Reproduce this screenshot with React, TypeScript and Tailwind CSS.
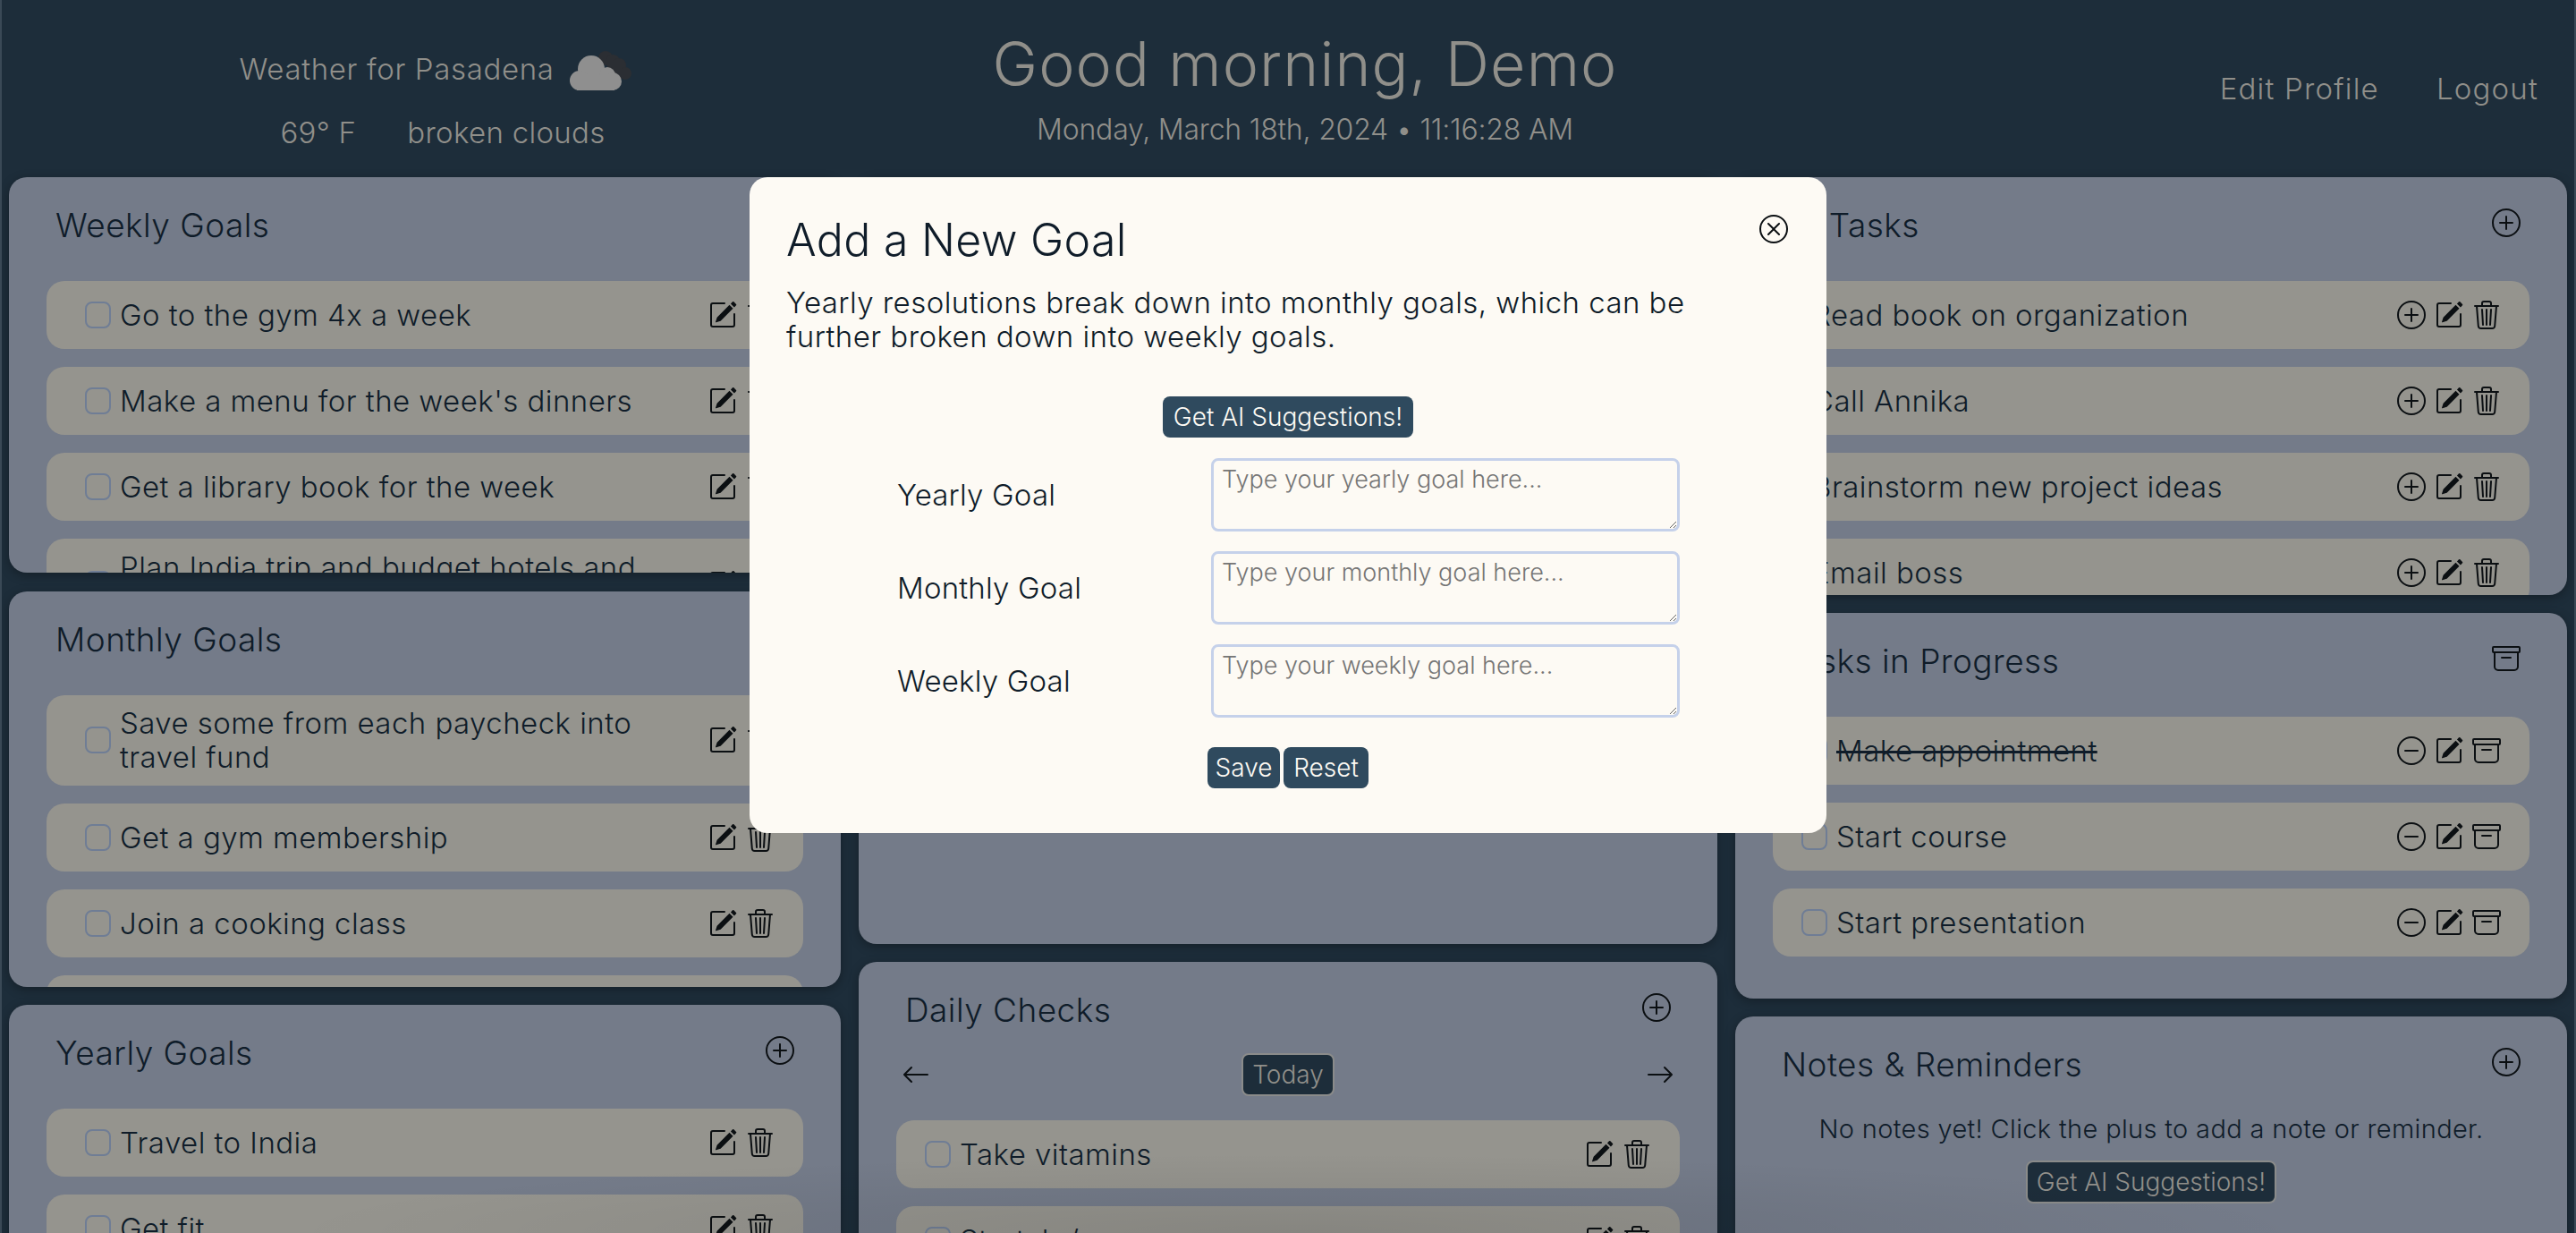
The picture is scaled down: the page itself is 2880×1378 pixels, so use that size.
import React from "react";
import {
  BsPlusCircle,
  BsPencilSquare,
  BsTrash3,
  BsArchive,
  BsDashCircle,
  BsXCircle,
  BsArrowLeft,
  BsArrowRight,
} from "react-icons/bs";

const font = "font-['Inter','Liberation_Sans',sans-serif]";

function Cloud() {
  return (
    <svg width="72" height="48" viewBox="0 0 72 48" className="ml-[15px] blur-[0.6px]">
      <g fill="#2b2e33">
        <circle cx="42" cy="11" r="8" />
        <circle cx="50" cy="15" r="8" />
        <circle cx="57" cy="19" r="8" />
        <circle cx="64" cy="28" r="7" />
        <rect x="44" y="14" width="16" height="20" />
      </g>
      <g fill="#8f8f8f">
        <circle cx="26" cy="23" r="15" />
        <circle cx="44" cy="30" r="9" />
        <circle cx="13" cy="36" r="11" />
        <circle cx="50" cy="37" r="10" />
        <rect x="10" y="30" width="42" height="17" />
      </g>
    </svg>
  );
}

function Check() {
  return <span className="block w-[29px] h-[30px] shrink-0 rounded-[8px] border-2 border-[#6f7d95]" />;
}

function Row({
  text,
  add,
  minus,
  archive,
  strike,
  narrow,
  wide,
  noCheck,
}: {
  text: string;
  add?: boolean;
  minus?: boolean;
  archive?: boolean;
  strike?: boolean;
  narrow?: boolean;
  wide?: boolean;
  noCheck?: boolean;
}) {
  return (
    <div
      className={`flex items-center shrink-0 min-h-[76px] rounded-[20px] bg-[#95948e] pr-[32px] py-[12.5px] ${wide ? "pl-[43px]" : noCheck ? "pl-[44px]" : "pl-[32px]"}`}
    >
      {!noCheck && <Check />}
      <span
        className={`text-[33px] leading-[38.4px] font-[350] tracking-[0.45px] text-[#0f1c29] ${noCheck ? "" : "ml-[10px]"} ${strike ? "line-through" : ""} ${narrow ? "max-w-[640px]" : ""}`}
      >
        {text}
      </span>
      <span className="ml-auto flex items-center gap-[10px] text-[#0b0f12]">
        {add && <BsPlusCircle size={32} />}
        {minus && <BsDashCircle size={32} />}
        <BsPencilSquare size={32} />
        {archive ? <BsArchive size={32} /> : <BsTrash3 size={32} />}
      </span>
    </div>
  );
}

function Panel({
  title,
  h,
  icon,
  children,
  shift,
}: {
  title?: string;
  h: string;
  icon?: React.ReactNode;
  children?: React.ReactNode;
  shift?: boolean;
}) {
  return (
    <section className={`${h} shrink-0 overflow-hidden rounded-[20px] bg-[#747b89] shadow-[0_3px_12px_rgba(0,0,0,0.3)] px-[42px] pt-[34px]`}>
      {title && (
        <div className="flex items-start justify-between pl-[10px] pr-[10px] h-[82px]">
          <h2 className={`text-[37px] leading-[40px] font-[350] tracking-[0.45px] text-[#0f1c29] ${shift ? "-ml-[13px]" : ""}`}>{title}</h2>
          {icon && <span className="block text-[#0b0f12] mt-[1px]">{icon}</span>}
        </div>
      )}
      {children}
    </section>
  );
}

function Rows({ children }: { children: React.ReactNode }) {
  return <div className="flex flex-col gap-[20px]">{children}</div>;
}

function Area({ label, placeholder }: { label: string; placeholder: string }) {
  return (
    <div className="flex items-center">
      <label className="w-[351px] pt-[1px] text-[33px] font-[350] tracking-[0.2px] text-[#0f1c29]">{label}</label>
      <textarea
        placeholder={placeholder}
        className="block w-[524px] h-[82px] rounded-[8px] border-[3px] border-[#c5d1ea] bg-[#fdfaf4] px-[9px] py-[5px] text-[27px] leading-[32px] font-light placeholder:text-[#757575]"
      />
    </div>
  );
}

function DarkBtn({ children, className = "" }: { children: React.ReactNode; className?: string }) {
  return (
    <button className={`h-[46px] rounded-[8px] bg-[#2f4a5e] text-[#fdfaf4] text-[28px] leading-[46px] font-light ${className}`}>
      {children}
    </button>
  );
}

export default function App() {
  return (
    <div className={`relative h-[1378px] overflow-hidden border-x-2 border-[#3a4956] bg-[#1d2d3a] ${font}`}>
      <header className="flex h-[198px] text-[#908f8a] font-[350]">
        <div className="w-[958px] flex flex-col items-center pl-[12px] pt-[54px]">
          <div className="flex items-center h-[48px] text-[33px] tracking-[0.65px]">
            Weather for Pasadena
            <Cloud />
          </div>
          <div className="flex gap-[57px] ml-[16px] mt-[26px] text-[33px] leading-[40px] tracking-[0.3px]">
            <span>69° F</span>
            <span>broken clouds</span>
          </div>
        </div>
        <div className="w-[998px] flex flex-col items-center pt-[33px]">
          <h1 className="text-[68px] leading-[76px] font-[350] tracking-[1.1px]">Good morning, Demo</h1>
          <p className="mt-[16px] text-[32px] leading-[40px] tracking-[-0.2px]">Monday, March 18th, 2024 • 11:16:28 AM</p>
        </div>
        <nav className="flex-1 flex justify-end gap-[64px] pr-[40px] pt-[78px] text-[33px] leading-[42px] tracking-[1.2px]">
          <span>Edit Profile</span>
          <span>Logout</span>
        </nav>
      </header>

      <main className="flex gap-[20px] px-[8px] items-start">
        <div className="w-[930px] flex flex-col gap-[20.5px]">
          <Panel title="Weekly Goals" h="h-[442px]">
            <Rows>
              <Row wide text="Go to the gym 4x a week" />
              <Row wide text="Make a menu for the week's dinners" />
              <Row wide text="Get a library book for the week" />
              <Row wide text="Plan India trip and budget hotels and flights" narrow />
            </Rows>
          </Panel>
          <Panel title="Monthly Goals" h="h-[442px]">
            <Rows>
              <Row wide text="Save some from each paycheck into travel fund" narrow />
              <Row wide text="Get a gym membership" />
              <Row wide text="Join a cooking class" />
              <Row wide text="" />
            </Rows>
          </Panel>
          <Panel title="Yearly Goals" h="h-[442px]" icon={<BsPlusCircle size={32} />}>
            <Rows>
              <Row wide text="Travel to India" />
              <Row wide text="Get fit" />
            </Rows>
          </Panel>
        </div>

        <div className="w-[960px] flex flex-col gap-[20px]">
          <Panel h="h-[857px]" />
          <Panel title="Daily Checks" h="h-[442px]" icon={<BsPlusCircle size={32} />}>
            <div className="flex items-center justify-between h-[48px] -mt-[14px] mb-[27px] px-[6px] text-[#0b0f12]">
              <BsArrowLeft size={32} />
              <span className="h-[48px] px-[10px] rounded-[8px] border-2 border-[#8a8b8a] bg-[#1d2d3a] text-[#908f8a] text-[28px] leading-[44px] font-light">
                Today
              </span>
              <BsArrowRight size={32} />
            </div>
            <Rows>
              <Row text="Take vitamins" />
              <Row text="Stretch / yoga" />
            </Rows>
          </Panel>
        </div>

        <div className="w-[930px] flex flex-col gap-[20px]">
          <Panel title="My Tasks" h="h-[467px]" icon={<BsPlusCircle size={32} />} shift>
            <Rows>
              <Row noCheck text="Read book on organization" add />
              <Row noCheck text="Call Annika" add />
              <Row noCheck text="Brainstorm new project ideas" add />
              <Row noCheck text="Email boss" add />
            </Rows>
          </Panel>
          <Panel title="Tasks in Progress" h="h-[431px]" icon={<BsArchive size={32} />}>
            <Rows>
              <Row text="Make appointment" minus archive strike />
              <Row text="Start course" minus archive />
              <Row text="Start presentation" minus archive />
            </Rows>
          </Panel>
          <Panel title="Notes & Reminders" h="h-[442px]" icon={<BsPlusCircle size={32} />}>
            <p className="text-center text-[29px] leading-[36px] font-[350] tracking-[0.35px] text-[#0f1c29] -mt-[8px]">
              No notes yet! Click the plus to add a note or reminder.
            </p>
            <div className="flex justify-center mt-[17px]">
              <button className="h-[48px] w-[280px] rounded-[8px] border-2 border-[#8a8b8a] bg-[#1d2d3a] text-[#908f8a] text-[28px] leading-[44px] font-light">
                Get AI Suggestions!
              </button>
            </div>
          </Panel>
        </div>
      </main>

      <div className="pointer-events-none absolute left-[300px] bottom-0 w-[2300px] h-[90px] bg-[radial-gradient(ellipse_at_50%_100%,rgba(0,0,0,0.1),transparent_70%)]" />

      <div className="absolute left-[836px] top-[198px] w-[1204px] h-[733px] rounded-[20px] bg-[#fdfaf4] px-[41px] pt-[40px] text-[#0f1c29]">
        <BsXCircle size={32} className="absolute right-[43px] top-[42px] text-[#0b0f12]" />
        <h2 className="text-[50px] leading-[60px] font-[350] tracking-[0.3px]">Add a New Goal</h2>
        <p className="mt-[21px] max-w-[1030px] text-[33px] leading-[38.4px] font-[350] tracking-[0.45px]">
          Yearly resolutions break down into monthly goals, which can be further broken down into weekly goals.
        </p>
        <div className="flex justify-center mt-[47px]">
          <DarkBtn className="w-[280px]">Get AI Suggestions!</DarkBtn>
        </div>
        <div className="flex flex-col gap-[22px] mt-[23px] pl-[124px]">
          <Area label="Yearly Goal" placeholder="Type your yearly goal here..." />
          <Area label="Monthly Goal" placeholder="Type your monthly goal here..." />
          <Area label="Weekly Goal" placeholder="Type your weekly goal here..." />
        </div>
        <div className="flex justify-center gap-[4px] mt-[33px]">
          <DarkBtn className="w-[81px]">Save</DarkBtn>
          <DarkBtn className="w-[95px]">Reset</DarkBtn>
        </div>
      </div>
    </div>
  );
}
